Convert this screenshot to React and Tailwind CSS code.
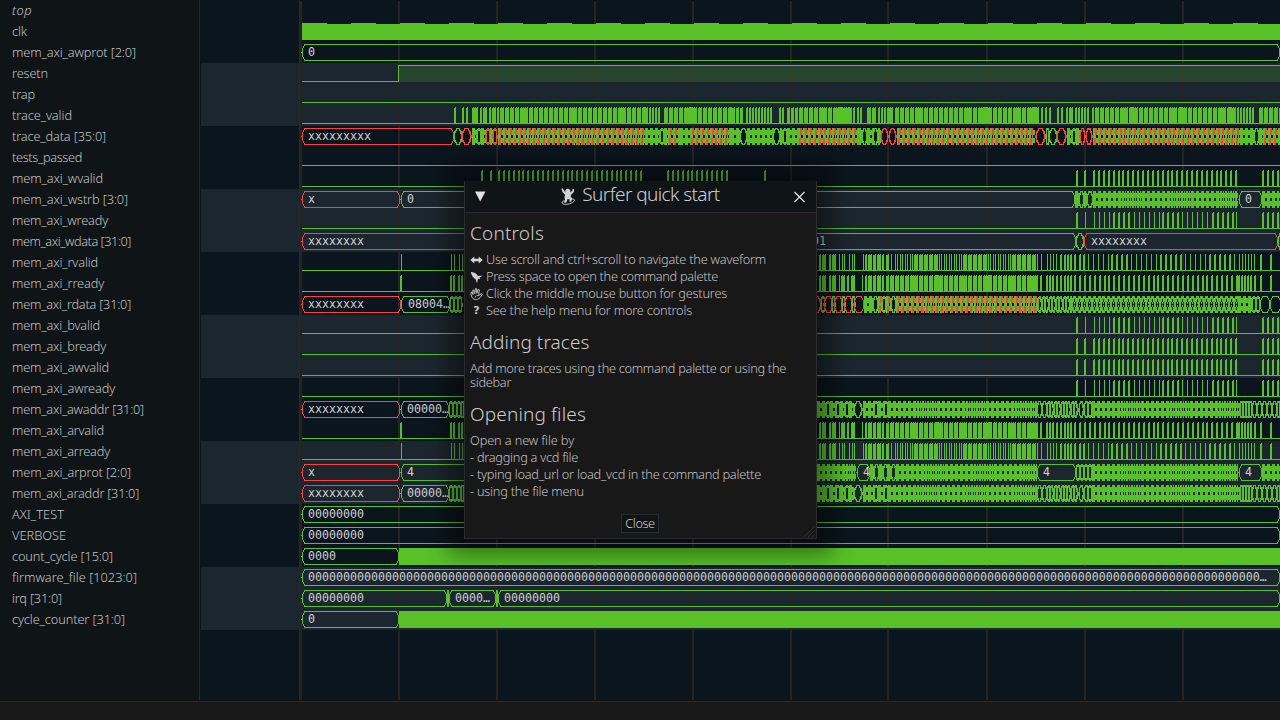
import React, { useLayoutEffect, useRef, useState } from "react";

const GREEN = "#57c127";
const RED = "#ff4040";

const NAMES = [
  ["top", 20], ["clk", 15], ["mem_axi_awprot [2:0]", 124], ["resetn", 36], ["trap", 23],
  ["trace_valid", 60], ["trace_data [35:0]", 94], ["tests_passed", 70], ["mem_axi_wvalid", 91],
  ["mem_axi_wstrb [3:0]", 116], ["mem_axi_wready", 96], ["mem_axi_wdata [31:0]", 119],
  ["mem_axi_rvalid", 86], ["mem_axi_rready", 92], ["mem_axi_rdata [31:0]", 119],
  ["mem_axi_bvalid", 88], ["mem_axi_bready", 94], ["mem_axi_awvalid", 97],
  ["mem_axi_awready", 103], ["mem_axi_awaddr [31:0]", 132], ["mem_axi_arvalid", 92],
  ["mem_axi_arready", 98], ["mem_axi_arprot [2:0]", 119], ["mem_axi_araddr [31:0]", 127],
  ["AXI_TEST", 52], ["VERBOSE", 54], ["count_cycle [15:0]", 101], ["firmware_file [1023:0]", 125],
  ["irq [31:0]", 50], ["cycle_counter [31:0]", 113],
];

// Spreads the letters so that the longest line takes exactly `width` pixels.
function Fit({ text, width, className = "" }) {
  const ref = useRef(null);
  const [gap, setGap] = useState(0);
  useLayoutEffect(() => {
    const natural = ref.current.getBoundingClientRect().width;
    const longest = Math.max(...text.split("\n").map((line) => line.length));
    setGap((width - natural) / longest);
  }, [text, width]);
  return (
    <span ref={ref} className={"inline-block whitespace-pre " + className} style={{ letterSpacing: gap + "px" }}>
      {text}
    </span>
  );
}

const P = (from, to, step, w) => {
  const out = [];
  for (let x = from; x < to; x += step) out.push([Math.round(x), w]);
  return out;
};
const one = (w, ...xs) => xs.map((x) => [x, w]);

const TRACE_VALID = [
  ...one(2, 454, 462, 466, 472, 480, 489, 497), ...one(4, 474, 483, 492),
  ...P(500, 643, 4.9, 4), ...P(643, 660, 3, 2), ...P(664, 728, 4.9, 4), [688, 9], ...P(728, 741, 4, 3),
  ...P(746, 773, 3, 2), ...one(2, 779, 782), ...P(787, 799, 4, 3), ...P(799, 848, 4.9, 4), [836, 13],
  ...P(850, 862, 3.4, 2), ...one(4, 867, 872), ...one(2, 878, 881, 884), [887, 6], ...P(895, 1035, 4.9, 4),
  [982, 8], [1031, 8], ...one(2, 1041, 1045, 1049, 1057, 1061, 1066, 1069, 1071, 1075, 1078, 1081, 1084, 1087, 1092),
  ...P(1095, 1236, 4.9, 4), [1130, 8], [1179, 8], [1228, 8], ...P(1237, 1255, 3, 2), ...P(1259, 1280, 4.9, 4),
];
const WIDE = [...one(2, 1076, 1084), ...P(1093, 1237, 4.9, 2), ...P(1262, 1280, 5, 2)];
const WVALID = [...one(2, 481, 490), ...P(498, 643, 4.9, 2), ...P(667, 728, 4.9, 2), [764, 2], ...WIDE];
const SPARSE = [
  [1076, 2], [1085, 1], ...P(1094, 1110, 4.9, 1), ...P(1113, 1131, 4.9, 2), ...P(1134, 1161, 4.9, 1),
  ...P(1162, 1180, 4.9, 2), ...P(1182, 1210, 4.9, 1), ...P(1212, 1232, 4.9, 2), [1236, 1], ...P(1262, 1280, 5, 2),
];
const RVALID = [
  ...one(1, 401, 451, 454, 459, 462), ...one(2, 819, 829), ...one(4, 822, 832),
  ...one(1, 839, 842, 844, 849, 852, 854, 863), [865, 2], [868, 4], [873, 3], [877, 4], [882, 2], [886, 3],
  ...one(1, 891, 895, 897, 900, 902, 905, 907, 910, 912), ...P(914, 937, 4.9, 4), ...P(939, 962, 2.45, 1),
  ...P(963, 986, 4.9, 4), ...P(988, 1011, 2.45, 1), ...P(1012, 1036, 4.9, 4),
  ...one(1, 1037, 1041, 1047, 1050, 1053, 1056), ...one(2, 1060, 1064, 1067, 1070, 1074, 1079, 1083),
  ...P(1088, 1109, 4.9, 1), ...P(1111, 1129, 4.9, 2), ...P(1131, 1158, 4.9, 1), ...P(1160, 1183, 4.9, 2),
  ...P(1185, 1209, 4.9, 1), ...P(1209, 1231, 4.9, 2), [1234, 1], ...P(1239, 1257, 3, 1), ...one(2, 1260, 1270),
];
const RREADY = [
  ...one(2, 400, 450, 453, 458, 461, 819, 829), ...one(4, 822, 832), [839, 1], [841, 4], [847, 2], [851, 4],
  [862, 1], [865, 2], [868, 4], [873, 3], [877, 4], [882, 2], [886, 3], ...P(890, 1036, 4.9, 4), [935, 8], [983, 8], [1031, 7],
  ...one(2, 1040, 1046, 1049, 1052, 1056, 1060, 1064, 1067, 1070, 1074), ...P(1079, 1236, 4.9, 2),
  ...P(1238, 1252, 3, 2), ...one(2, 1254, 1260, 1270),
];

function Bits({ row, pulses = [] }) {
  const y = row * 21 + 2;
  let d = "";
  pulses.forEach(([x, w]) => {
    if (w === 1) {
      d += `M${x} ${y}h1v17h-1z`;
      return;
    }
    d += `M${x} ${y + 1}h${w}v16h-${w}z`;
    for (let n = w - 1; n > 0; n -= 2) d += `M${x + n} ${y}h1v1h-1z`;
  });
  return <path fill={GREEN} d={`M302 ${y + 16}H1280v1H302z${d}`} />;
}

function Seg({ row, a, b, c = GREEN, t, dx = 6 }) {
  const top = row * 21 + 2.5;
  const mid = top + 8;
  const bot = top + 16;
  const k = Math.min(3, (b - a) / 2.6);
  return (
    <g>
      <path
        fill="none"
        stroke={c}
        strokeWidth={b - a < 10 ? 1.5 : 1}
        d={`M${a} ${mid}l${k * 0.4} -5L${a + k} ${top}H${b - k}L${b - k * 0.4} ${mid - 5}L${b} ${mid}l${-k * 0.4} 5L${b - k} ${bot}H${a + k}L${a + k * 0.4} ${mid + 5}z`}
      />
      {t && (
        <text x={a + dx} y={row * 21 + 14} fill="#cfd1d2" className="font-['DejaVu_Sans_Mono',monospace] text-[11.63px]" shapeRendering="auto">
          {t}
        </text>
      )}
    </g>
  );
}

// A run of values too short to be told apart.
function Dense({ row, a, b, mixed }) {
  const y = row * 21 + 2;
  let d = `M${a} ${y + 2}H${b}v5H${a}zM${a} ${y + 10}H${b}v5H${a}z`;
  P(a, b - 1, 2.45, 2).forEach(([x], i) => (d += i % 2 ? `M${x} ${y}h1v17h-1z` : `M${x} ${y}h2v17h-2z`));
  let r = "";
  if (mixed) P(a + 1, b - 2, 4.9, 2).forEach(([x]) => (r += `M${x + 1} ${y}h2v7h-2zM${x} ${y + 10}h2v7h-2z`));
  return (
    <g>
      <path fill={GREEN} d={d} />
      {mixed && <path fill={RED} d={r} />}
    </g>
  );
}

function Hatch({ row, a, b }) {
  const y = row * 21 + 2;
  let d = "";
  P(a, b - 3, 4.9, 0).forEach(([x]) => {
    d += `M${x} ${y}h3v3h-3zM${x} ${y + 14}h3v3h-3zM${x - 1} ${y + 2}h2v4h-2zM${x + 2} ${y + 2}h2v4h-2z`;
    d += `M${x - 1} ${y + 11}h2v4h-2zM${x + 2} ${y + 11}h2v4h-2zM${x - 2} ${y + 5}h2v7h-2zM${x + 1} ${y + 6}h1v2h-1zM${x + 1} ${y + 9}h1v2h-1z`;
  });
  return <path fill={GREEN} d={d} />;
}

// Draws items in order: [start, end, kind, text]
function Bus({ row, items }) {
  return (
    <g>
      {items.map(([a, b, kind = "g", t, dx], i) => {
        if (kind === "h") return <Hatch key={i} row={row} a={a} b={b} />;
        if (kind === "d" || kind === "m") return <Dense key={i} row={row} a={a} b={b} mixed={kind === "m"} />;
        return <Seg key={i} row={row} a={a} b={b} c={kind === "r" ? RED : GREEN} t={t} dx={dx} />;
      })}
    </g>
  );
}

const ovals = (a, b, step, kind = "g") => P(a, b - step / 2, step, 0).map(([x]) => [x, Math.min(b, x + step), kind]);

const ADDR = [
  [302, 400, "r", "xxxxxxxx"], [401, 449, "g", "00000…"], ...ovals(449, 464, 4),
  [817, 826, "d"], ...ovals(826, 830, 4), [830, 836, "d"], ...ovals(836, 840, 4), [840, 845, "d"], ...ovals(845, 849, 4),
  [849, 854, "d"], [854, 862, "g"], [863, 874, "d"], ...ovals(874, 878, 4), [878, 884, "d"], ...ovals(884, 888, 4),
  [888, 1037, "d"], ...ovals(1037, 1047, 5), ...ovals(1047, 1079, 3.4), ...ovals(1079, 1092, 4.5), [1092, 1240, "d"],
  ...ovals(1240, 1252, 3), ...ovals(1252, 1280, 5),
];

const TRACE_DATA = [
  [302, 454, "r", "xxxxxxxxx"], [454, 462, "g"], [462, 471, "r"], [472, 477, "d"], [477, 481, "g"], [481, 486, "d"],
  [486, 490, "r"], [490, 493, "d"], [493, 497, "r"], [498, 645, "m"], [645, 660, "d"], [660, 664, "g"], [664, 668, "d"],
  [668, 680, "m"], [680, 690, "d"], [690, 731, "m"], [731, 740, "d"], [740, 747, "g"], [747, 773, "d"], [773, 780, "g"],
  [780, 783, "d"], [783, 787, "g"], [787, 798, "d"], [798, 858, "m"], [858, 862, "d"], [862, 867, "g"], [867, 873, "d"],
  [873, 878, "g"], [878, 881, "d"], [881, 888, "r"], [889, 896, "r"], [897, 1035, "m"], [1036, 1045, "r"],
  [1046, 1049, "g"], [1049, 1057, "g"], [1057, 1066, "r"], [1067, 1072, "d"], [1072, 1076, "g"], [1076, 1080, "d"],
  [1080, 1085, "r"], [1086, 1092, "r"], [1093, 1240, "m"], [1240, 1254, "d"], [1254, 1259, "g"], [1259, 1263, "d"], [1263, 1280, "m"],
];

const RDATA = [
  [302, 401, "r", "xxxxxxxx"], [401, 450, "g", "08004…", 7], ...ovals(450, 464, 4),
  [812, 821, "r"], [821, 825, "g"], [824, 833, "r"], [832, 835, "g"], [834, 843, "r"], [842, 845, "g"], [844, 853, "r"], [852, 855, "g"],
  [854, 864, "r"], [864, 873, "d"], [873, 878, "g"], [878, 883, "m"], [882, 886, "g"], [886, 891, "m"], [891, 896, "g"],
  [896, 1038, "m"], ...ovals(1038, 1072, 3.5), [1073, 1240, "h"], [1238, 1252, "d"], ...ovals(1252, 1260, 4),
  [1260, 1270, "g"], [1270, 1281, "g"],
];

const ARPROT = [
  [302, 400, "r", "x"], [401, 480, "g", "4"], [817, 856, "d"], [857, 870, "g", "4"], [870, 874, "d"], ...ovals(874, 880, 5), [879, 883, "d"],
  ...ovals(883, 888, 5), [887, 891, "d"], [891, 896, "g"], [896, 1037, "d"], [1037, 1076, "g", "4"],
  ...ovals(1076, 1092, 4), [1092, 1238, "d"], [1239, 1262, "g", "4"], [1262, 1280, "d"],
];

const WSTRB = [
  [302, 400, "r", "x"], [401, 1075, "g", "0"], [1075, 1079, "d"], [1079, 1084, "g"], [1084, 1087, "d"], [1087, 1093, "g"],
  [1093, 1238, "d"], [1239, 1262, "g", "0"], [1262, 1280, "d"],
];

function Waves() {
  const clkTop = P(302, 1280, 49, 25).map(([x, w]) => `M${x} 23h${w}v1h-${w}z`).join("");
  return (
    <svg viewBox="300 0 980 700" width="980" height="700" className="block" shapeRendering="crispEdges">
      {[3, 9, 15, 21, 27].map((r) => (
        <rect key={r} x="302" y={r * 21} width="978" height="63" fill="#1c262e" />
      ))}
      {[300, 398, 496, 594, 692, 790, 887, 986, 1084, 1182].map((x) => (
        <rect key={x} x={x} y="1" width="2" height="699" fill="#252425" />
      ))}
      <path fill={GREEN} d={`M302 24H1280V40H302z${clkTop}`} />
      <Bus row={2} items={[[302, 1280, "g", "0"]]} />
      <rect x="399" y="66" width="881" height="16" fill="#57c127" fillOpacity="0.2" />
      <path fill={GREEN} d="M302 81H398V65H1280V66H399V82H302z" />
      <Bits row={4} />
      <Bits row={5} pulses={TRACE_VALID} />
      <Bus row={6} items={TRACE_DATA} />
      <Bits row={7} />
      <Bits row={8} pulses={WVALID} />
      <Bus row={9} items={WSTRB} />
      <Bits row={10} pulses={SPARSE} />
      <Bus row={11} items={[[302, 560, "r", "xxxxxxxx"], [756, 1076, "g", "00000001", 14], [1076, 1084, "g"], [1084, 1278, "r", "xxxxxxxx", 7], [1278, 1284, "g"]]} />
      <Bits row={12} pulses={RVALID} />
      <Bits row={13} pulses={RREADY} />
      <Bus row={14} items={RDATA} />
      <Bits row={15} pulses={SPARSE} />
      <Bits row={16} pulses={WIDE} />
      <Bits row={17} pulses={WIDE} />
      <Bits row={18} pulses={SPARSE} />
      <Bus row={19} items={ADDR} />
      <Bits row={20} pulses={RREADY} />
      <Bits row={21} pulses={RVALID} />
      <Bus row={22} items={ARPROT} />
      <Bus row={23} items={ADDR} />
      <Bus row={24} items={[[302, 1280, "g", "00000000"]]} />
      <Bus row={25} items={[[302, 1280, "g", "00000000"]]} />
      <Bus row={26} items={[[302, 399, "g", "0000"]]} />
      <rect x="399" y="548" width="881" height="17" fill={GREEN} />
      <Bus row={27} items={[[302, 1280, "g", "0".repeat(136) + "…"]]} />
      <Bus row={28} items={[[302, 447, "g", "00000000"], [447, 449, "g"], [449, 496, "g", "0000…"], [496, 498, "g"], [498, 1280, "g", "00000000"]]} />
      <Bus row={29} items={[[302, 399, "g", "0"]]} />
      <rect x="399" y="611" width="881" height="17" fill={GREEN} />
    </svg>
  );
}

function Surfer() {
  return (
    <svg viewBox="0 0 14 17" className="h-[17px] w-[14px]" fill="#d2d4d5">
      <circle cx="6.800" cy="3.200" r="2.500" />
      <path d="M.3.8 1.900.4 3.400 3.200 5 4.600 9 4.400 11.200 3 11.600.9 13.100 1.300 12.800 4 10.100 6.700 9.600 9 11.300 10.200 10.100 13.800 8.200 13.600 8.700 11.600 6.600 11 5.200 14.800 3 14.600 4 11.400 3.500 9.400 4 6.600 1.600 4.200z" />
      <path fill="none" stroke="#d2d4d5" strokeWidth="0.9" d="M3.600 12.600C1.400 13.200.600 14.400 1.400 15.400 3 17 8 16.600 11.400 14.600 13.400 13.400 14 12 13 11.400 12.400 11 11.400 11 10.400 11.300" />
    </svg>
  );
}

const ArrowIcon = () => (
  <svg viewBox="0 0 13 12" className="h-3 w-[13px]" fill="#d6d6d6">
    <path d="M.3 6 4.300 2.400V4.700h4.400V2.400L12.700 6l-4 3.600V7.300H4.300v2.300z" />
  </svg>
);
const RocketIcon = () => (
  <svg viewBox="0 0 13 12" className="h-3 w-[13px]" fill="#d0d0d0">
    <path d="M.8 1C3.800 1 6.600 2.600 8 5L12 4.600 11.400 5.600 9.400 6.600 10.200 8.200 8.200 7.800 7.600 9.200 7.400 11.200 6.600 11.400 5.800 8.400C3 6.800 1.400 4.200.8 1z" />
  </svg>
);
const HandIcon = () => (
  <svg viewBox="0 0 13 12" className="h-3 w-[13px]" fill="none" stroke="#d0d0d0" strokeWidth="0.9" strokeLinejoin="round">
    <path d="M3.200 10.800C1.600 9.200.900 7 1 4.400L2 4.200 3 6.600 2.800 2.200 3.900 2 4.800 5.600 5.300.700 6.600.700 6.800 5.400 8.100 1.400 9.300 1.800 8.700 6.300 9 7.400 11.200 5.600 12.200 6.100C11.200 8.800 9.600 10.600 7.600 11.300 6 11.700 4.400 11.600 3.200 10.800z" />
    <path d="M5 9.400C5.400 8 7 7.300 8.800 7.500" />
  </svg>
);
const QuestionIcon = () => <span className="w-[13px] text-center font-['DejaVu_Sans'] text-[11px] font-bold leading-3 text-[#c8c8c8]">?</span>;

const H = ({ t, w }) => (
  <h2 className="h-6 text-[19px] leading-6 text-[#cecece]">
    <Fit text={t} width={w} />
  </h2>
);
const Tip = ({ icon, t, w }) => (
  <li className="flex h-[17px] items-center gap-[3px]">
    {icon}
    <Fit text={t} width={w} />
  </li>
);

function Dialog() {
  return (
    <div className="absolute left-[464px] top-[181px] flex h-[358px] w-[353px] flex-col border border-t-0 border-[#2a2c2d] bg-[#181818] text-[12.750px] leading-[17px] text-[#c2c2c2] shadow-[0_0_20px_16px_rgba(0,0,0,0.4)]">
      <header className="flex h-8 items-center justify-between border-b border-[#292c2f] bg-[#0f1417] pl-[10px] pr-[10px]">
        <svg viewBox="0 0 12 11" className="h-[11px] w-[12px]" fill="#e2e2e2">
          <path d="M0 .5h10.500L5.200 10.500z" />
        </svg>
        <h1 className="flex h-[31px] items-center gap-[7px] text-[19px] leading-none text-[#cecece]">
          <Surfer />
          <Fit text="Surfer quick start" width={137.500} className="-translate-y-[2px]" />
        </h1>
        <svg viewBox="0 0 12 12" className="h-3 w-3" stroke="#e6e6e6" strokeWidth="1.2">
          <path d="M.5 1 10.500 11M10.500 1 .5 11" />
        </svg>
      </header>
      <div className="flex flex-1 flex-col pl-[5px] pt-[8px]">
        <H t="Controls" w={74} />
        <ul className="mt-[6px]">
          <Tip icon={<ArrowIcon />} t="Use scroll and ctrl+scroll to navigate the waveform" w={280} />
          <Tip icon={<RocketIcon />} t="Press space to open the command palette" w={232} />
          <Tip icon={<HandIcon />} t="Click the middle mouse button for gestures" w={241} />
          <Tip icon={<QuestionIcon />} t="See the help menu for more controls" w={206} />
        </ul>
        <div className="mt-[11px]">
          <H t="Adding traces" w={119.500} />
        </div>
        <p className="mt-[7px] flex flex-col items-start leading-[14px]">
          <Fit text={"Add more traces using the command palette or using the\nsidebar"} width={316} />
        </p>
        <div className="mt-[13px]">
          <H t="Opening files" w={116} />
        </div>
        <div className="mt-[6px] flex flex-col items-start">
          <Fit text="Open a new file by" width={104} />
          <Fit text="- dragging a vcd file" width={108} />
          <Fit text="- typing load_url or load_vcd in the command palette" width={291} />
          <Fit text="- using the file menu" width={114} />
        </div>
        <button className="ml-[151px] mt-[14px] flex h-[19px] w-[38px] items-center justify-center border border-[#272b2e] bg-[#0f1417] text-[#cecece]">
          <Fit text="Close" width={29.500} />
        </button>
      </div>
      <svg viewBox="0 0 12 12" className="absolute bottom-0 right-[1px] size-3" stroke="#2e2e2e" fill="none">
        <path d="M1 11 11 1M5 11 11 5M9 11 11 9" />
      </svg>
    </div>
  );
}

export default function App() {
  return (
    <div className="relative flex h-[720px] w-[1280px] flex-col overflow-hidden bg-[#0b151d] font-['Noto_Sans','Open_Sans',sans-serif] font-light">
      <div className="flex h-[700px]">
        <aside className="w-[200px] border-r border-[#26292b] bg-[#0f1416] pl-3 text-[12.750px] text-[#c2c4c5]">
          {NAMES.map(([n, w], i) => (
            <div key={n} className={i === 0 ? "flex h-[21px] items-center italic" : "flex h-[21px] items-center"}>
              <Fit text={n} width={w} />
            </div>
          ))}
        </aside>
        <div className="w-[100px] border-r border-[#26292b] pl-px">
          {NAMES.map(([n], i) => (
            <div key={n} className={Math.floor(i / 3) % 2 === 1 ? "h-[21px] bg-[#1c262e]" : "h-[21px]"} />
          ))}
        </div>
        <Waves />
      </div>
      <footer className="h-5 border-t border-[#111213] bg-[#181818]">
        <div className="h-px bg-[#292a2b]" />
      </footer>
      <Dialog />
    </div>
  );
}
